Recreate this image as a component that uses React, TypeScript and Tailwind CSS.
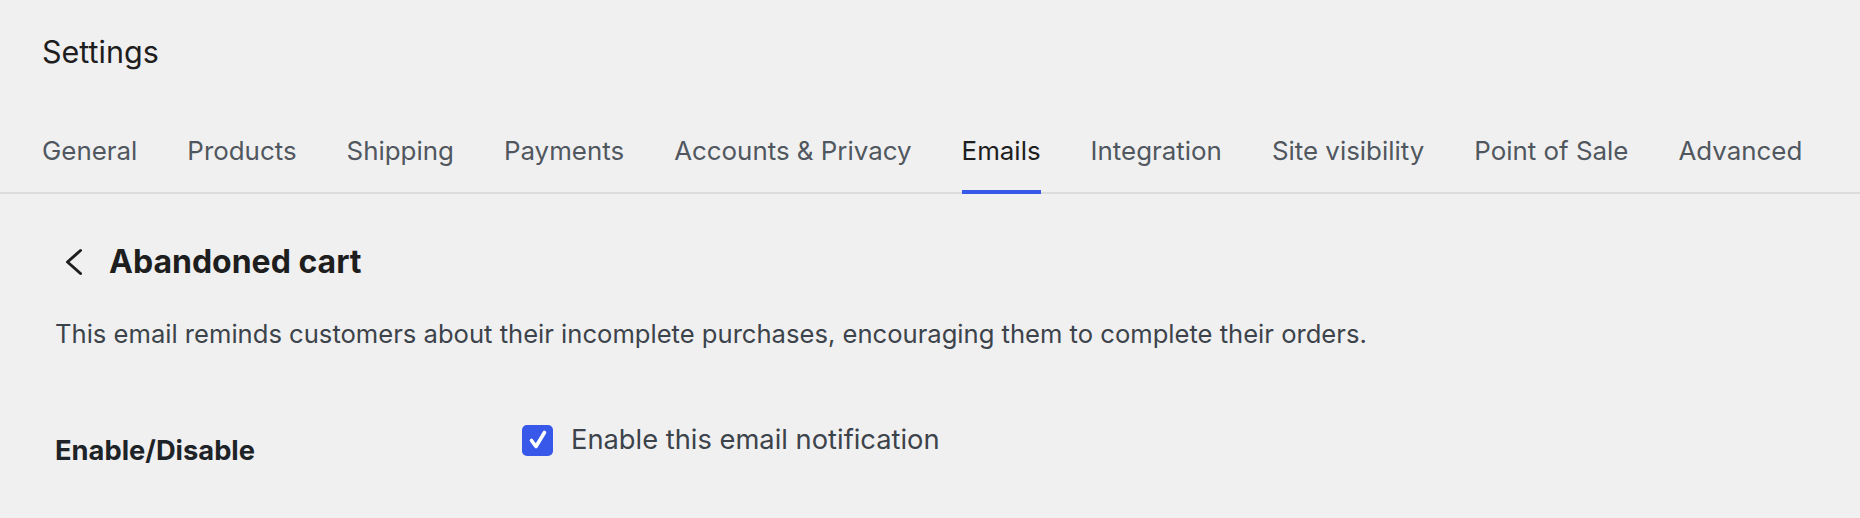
import { useState } from 'react';

const TABS = [
  'General',
  'Products',
  'Shipping',
  'Payments',
  'Accounts & Privacy',
  'Emails',
  'Integration',
  'Site visibility',
  'Point of Sale',
  'Advanced',
];

export default function App() {
  const [enabled, setEnabled] = useState(true);

  return (
    <div className="min-h-[518px] w-full bg-[#f0f0f1] font-['Inter',sans-serif] antialiased">
      {/* header */}
      <header className="px-[42px] pt-[34px]">
        <h1 className="text-[30.5px] leading-[36px] font-normal text-[#1e1e1e]">Settings</h1>
        <nav className="mt-[65px] flex gap-[50px] border-b-2 border-[#dcdcde] -mx-[42px] px-[42px]">
          {TABS.map((tab) => (
            <a
              key={tab}
              className={
                tab === 'Emails'
                  ? '-mb-[2px] border-b-4 border-[#3858e9] pb-[23px] text-[25.9px] leading-[32px] text-[#1e1e1e]'
                  : '-mb-[2px] border-b-4 border-transparent pb-[23px] text-[25.9px] leading-[32px] text-[#50575e]'
              }
            >
              {tab}
            </a>
          ))}
        </nav>
      </header>

      {/* email settings */}
      <section className="px-[55px] pt-[48px]">
        <div className="flex items-center gap-[24px] ml-[8px]">
          <svg width="22" height="28" viewBox="0 0 22 28" fill="none" className="shrink-0">
            <path d="M17.5 2.5 L4.5 14 L17.5 25.5" stroke="#1e1e1e" strokeWidth="3" strokeLinecap="round" strokeLinejoin="round" />
          </svg>
          <h2 className="text-[32px] leading-[40px] font-bold text-[#1e1e1e]">Abandoned cart</h2>
        </div>

        <p className="mt-[36px] text-[25.6px] leading-[32px] text-[#3c434a]">
          This email reminds customers about their incomplete purchases, encouraging them to complete their orders.
        </p>

        <div className="mt-[74px] flex items-start">
          <div className="w-[467px] pt-[11px] text-[27.3px] leading-[32px] font-bold text-[#1d2327]">
            Enable/Disable
          </div>
          <label className="flex items-center gap-[18px] cursor-pointer">
            <button
              type="button"
              onClick={() => setEnabled(!enabled)}
              className="flex h-[31px] w-[31px] items-center justify-center rounded-[5px] bg-[#3858e9]"
            >
              {enabled && (
                <svg width="24" height="24" viewBox="0 0 24 24" fill="none">
                  <path d="M5.5 12.5 L10 18.5 L18.5 4.5" stroke="white" strokeWidth="3.6" strokeLinecap="round" strokeLinejoin="round" />
                </svg>
              )}
            </button>
            <span className="text-[27.3px] leading-[32px] text-[#3c434a]">Enable this email notification</span>
          </label>
        </div>
      </section>
    </div>
  );
}
